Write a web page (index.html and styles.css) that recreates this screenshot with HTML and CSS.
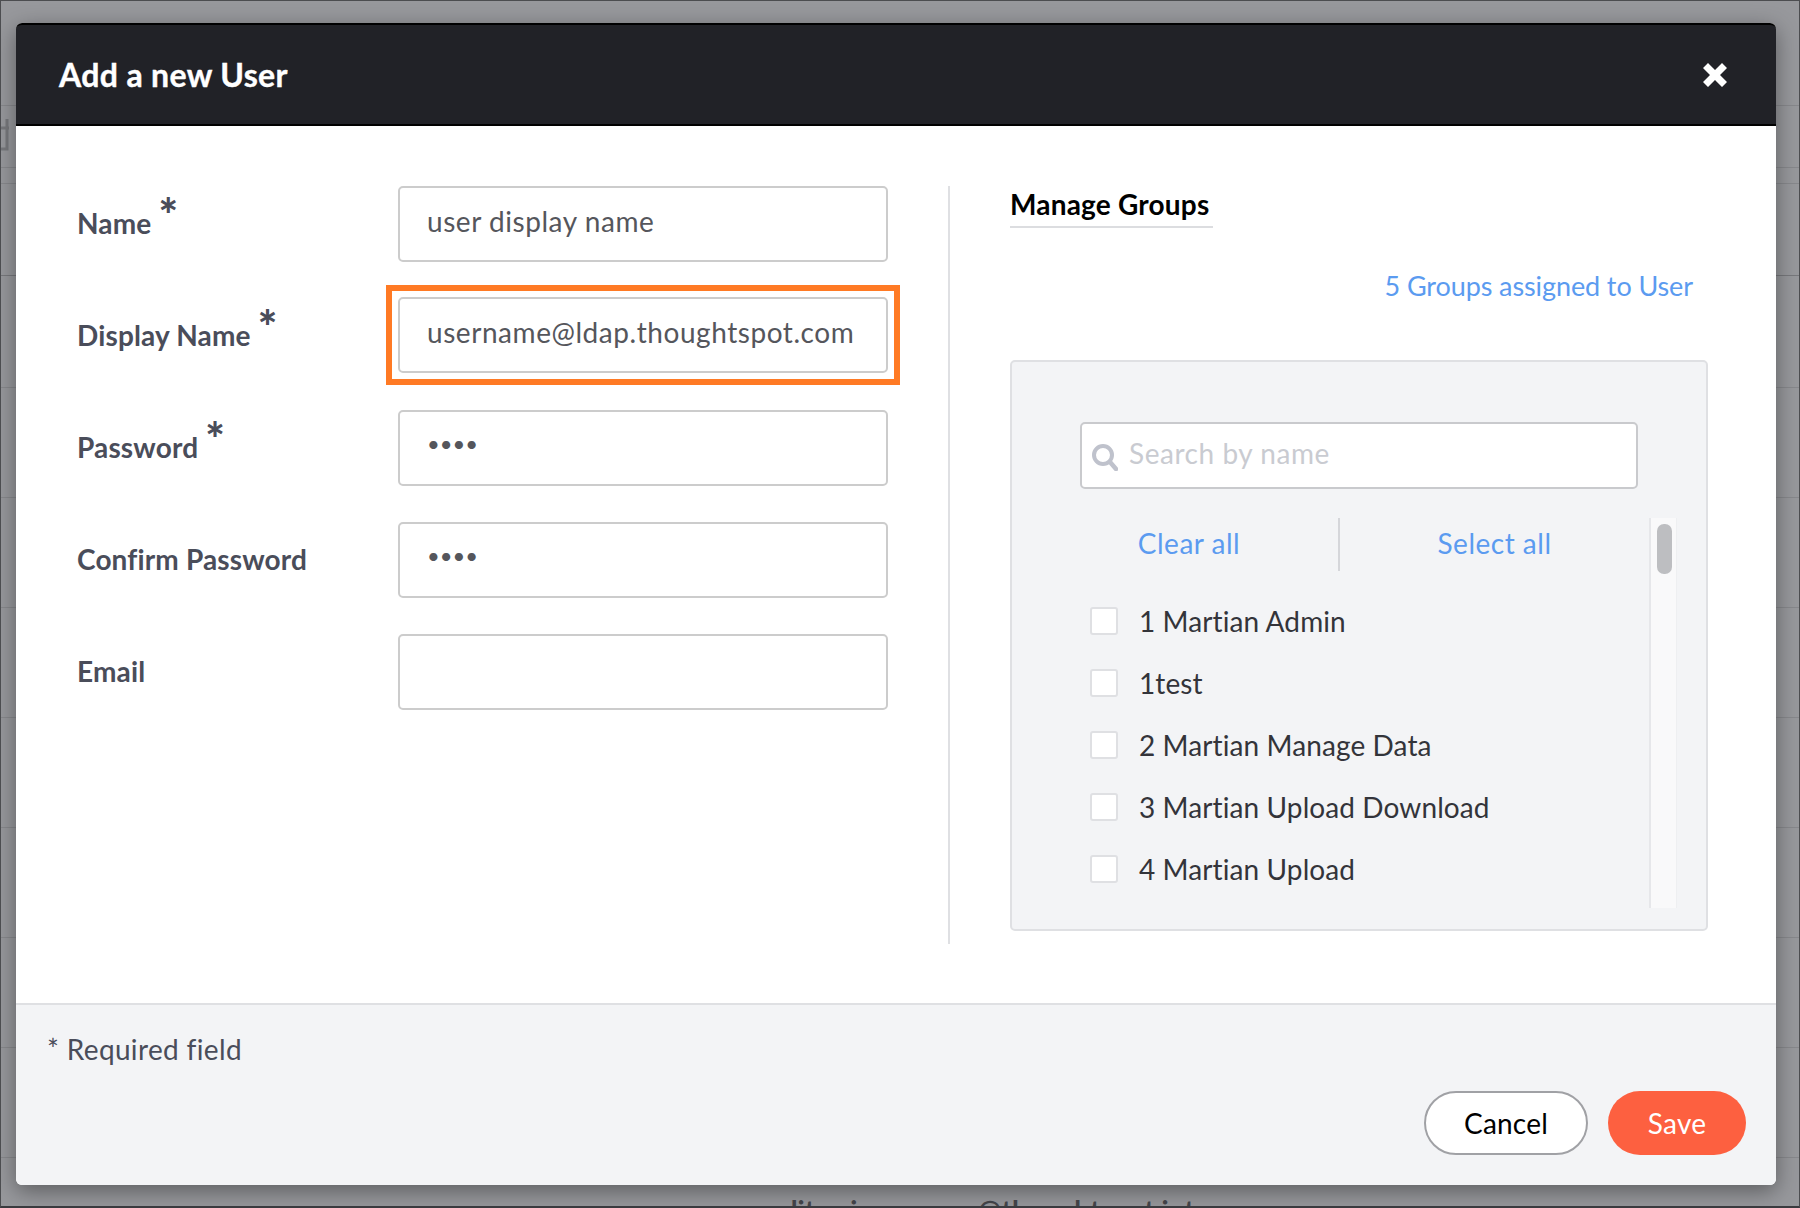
FILE: index.html
```html
<!DOCTYPE html>
<html lang="en">

<head>
    <meta charset="UTF-8">
    <meta name="viewport" content="width=device-width, initial-scale=1.0">
    <title>Add a new User</title>
    <link rel="stylesheet" href="styles.css">
</head>

<body>
    <div class="pageRows">
        <div class="pageRow topRow"></div>
        <div class="pageRow iconRow">
            <svg class="rowIcon" viewBox="0 0 9 34" width="9" height="34">
                <path d="M0 32H6V2M0 11H8" fill="none" stroke="#77787c" stroke-width="3"></path>
            </svg>
        </div>
        <div class="pageRow thinRow"></div>
        <div class="pageRow shortRow darkRow"></div>
        <div class="pageRow tallRow"></div>
        <div class="pageRow"></div>
        <div class="pageRow"></div>
        <div class="pageRow"></div>
        <div class="pageRow"></div>
        <div class="pageRow"></div>
        <div class="pageRow"></div>
        <div class="pageRow"></div>
        <div class="pageRow lastRow">aditya.jayaraman@thoughtspot.int</div>
    </div>

    <div class="modal">
        <div class="modalHeader">
            <span class="modalTitle">Add a new User</span>
            <svg class="closeIcon" viewBox="0 0 24 24" width="24" height="24">
                <path d="M5 0 12 7 19 0 24 5 17 12 24 19 19 24 12 17 5 24 0 19 7 12 0 5Z" fill="#fff"></path>
            </svg>
        </div>

        <div class="modalBody">
            <div class="userForm">
                <div class="formRow">
                    <label class="fieldLabel">Name<span class="star">*</span></label>
                    <input class="textInput" type="text" value="user display name">
                </div>
                <div class="formRow">
                    <label class="fieldLabel">Display Name<span class="star">*</span></label>
                    <div class="highlightBox">
                        <input class="textInput" type="text" value="username@ldap.thoughtspot.com">
                    </div>
                </div>
                <div class="formRow">
                    <label class="fieldLabel">Password<span class="star">*</span></label>
                    <input class="textInput passInput" type="password" value="1234">
                </div>
                <div class="formRow">
                    <label class="fieldLabel">Confirm Password</label>
                    <input class="textInput passInput" type="password" value="1234">
                </div>
                <div class="formRow">
                    <label class="fieldLabel">Email</label>
                    <input class="textInput" type="text">
                </div>
            </div>

            <div class="groupsSide">
                <div class="groupsTitle">Manage Groups</div>
                <div class="groupsCount">5 Groups assigned to User</div>
                <div class="groupsPanel">
                    <div class="searchBox">
                        <svg class="searchIcon" viewBox="0 0 26 28" width="26" height="28">
                            <circle cx="11" cy="12" r="9" fill="none" stroke="#bfc2cc" stroke-width="4"></circle>
                            <path d="M18 19 24 26" stroke="#bfc2cc" stroke-width="4.500" stroke-linecap="round"></path>
                        </svg>
                        <input class="searchInput" type="text" placeholder="Search by name">
                    </div>
                    <div class="listArea">
                        <div class="listMain">
                            <div class="listActions">
                                <a class="listAction clearAction">Clear all</a>
                                <a class="listAction selectAction">Select all</a>
                            </div>
                            <div class="groupItem"><span class="checkBox"></span>1 Martian Admin</div>
                            <div class="groupItem"><span class="checkBox"></span>1test</div>
                            <div class="groupItem"><span class="checkBox"></span>2 Martian Manage Data</div>
                            <div class="groupItem"><span class="checkBox"></span>3 Martian Upload Download</div>
                            <div class="groupItem"><span class="checkBox"></span>4 Martian Upload</div>
                        </div>
                        <div class="scrollTrack">
                            <div class="scrollThumb"></div>
                        </div>
                    </div>
                </div>
            </div>
        </div>

        <div class="modalFooter">
            <div class="requiredNote">* Required field</div>
            <div class="footerButtons">
                <button class="cancelBtn">Cancel</button>
                <button class="saveBtn">Save</button>
            </div>
        </div>
    </div>
</body>
</html>
```

FILE: styles.css
```css
* {
    box-sizing: border-box;
}

html {
    height: 100%;
    overflow: hidden;
}

body {
    height: 100%;
    margin: 0;
    overflow: hidden;
    position: relative;
    font-family: Lato, "Liberation Sans", sans-serif;
    background-color: #97989c;
    border: 1px solid #4c4d50;
    border-bottom: 2px solid #3a3b3f;
}

.pageRow {
    height: 110px;
    border-bottom: 1px solid #87888c;
}

.topRow {
    height: 105px;
}

.iconRow {
    height: 62px;
    padding-top: 11px;
}

.rowIcon {
    display: block;
}

.thinRow {
    height: 16px;
}

.shortRow {
    height: 92px;
}

.tallRow {
    height: 112px;
}

.darkRow {
    border-bottom-color: #77787c;
}

.lastRow {
    height: 60px;
    border-bottom: 0;
    padding: 35px 0 0 162px;
    text-align: center;
    font-size: 28px;
    font-weight: 700;
    color: #45464b;
}

.modal {
    position: absolute;
    left: 15px;
    top: 22px;
    width: 1760px;
    height: 1162px;
    display: flex;
    flex-direction: column;
    background-color: #fff;
    border-radius: 6px;
    box-shadow: 0 6px 22px rgba(0, 0, 0, 0.4);
}

.modalHeader {
    height: 103px;
    flex: none;
    display: flex;
    align-items: center;
    justify-content: space-between;
    padding: 0 49px 0 43px;
    background-color: #212227;
    border: 2px solid #000;
    border-width: 2px 0 2px 0;
    border-radius: 6px 6px 0 0;
}

.modalTitle {
    font-size: 32px;
    font-weight: 700;
    letter-spacing: 0.35px;
    color: #fff;
    -webkit-text-stroke: 0.4px #fff;
}

.modalBody {
    flex: 1;
    display: flex;
    padding: 60px 68px 0 61px;
}

.userForm {
    width: 873px;
    height: 758px;
    padding-right: 60px;
    border-right: 2px solid #dfe0e3;
}

.formRow {
    height: 112px;
    display: flex;
}

.fieldLabel {
    width: 321px;
    flex: none;
    padding-top: 20px;
    font-size: 28px;
    font-weight: 700;
    letter-spacing: 0.15px;
    color: #4a4d5a;
}

.star {
    display: inline-block;
    margin-left: 7px;
    font-size: 46px;
    font-weight: 900;
    line-height: 0;
    vertical-align: 2px;
}

.textInput {
    width: 491px;
    height: 76px;
    padding: 0 27px 7px;
    font-family: inherit;
    font-size: 28px;
    letter-spacing: 0.55px;
    color: #55565c;
    background-color: #fff;
    border: 2px solid #cccccc;
    border-radius: 5px;
    outline: none;
}

.passInput {
    font-size: 22px;
    letter-spacing: 0;
    padding-bottom: 10px;
}

.highlightBox {
    width: 514px;
    height: 100px;
    margin: -13px 0 0 -12px;
    padding: 6px;
    border: 6px solid #ff7a24;
}

.highlightBox .textInput {
    display: block;
    width: 490px;
}

.groupsSide {
    flex: 1;
    padding-left: 60px;
}

.groupsTitle {
    display: inline-block;
    height: 42px;
    padding-right: 4px;
    font-size: 28px;
    font-weight: 700;
    letter-spacing: 0.2px;
    line-height: 36px;
    color: #000;
    border-bottom: 2px solid #dcdde0;
}

.groupsCount {
    margin-top: 38px;
    padding-right: 15px;
    text-align: right;
    font-size: 27px;
    letter-spacing: -0.1px;
    line-height: 40px;
    color: #5b9bf0;
}

.groupsPanel {
    margin-top: 54px;
    height: 571px;
    padding: 60px 29px 0 68px;
    background-color: #f3f4f6;
    border: 2px solid #dfe0e3;
    border-radius: 5px;
}

.searchBox {
    position: relative;
    width: 558px;
    height: 67px;
    border: 2px solid #c9cacd;
    border-radius: 5px;
    background-color: #fff;
}

.searchIcon {
    position: absolute;
    left: 10px;
    top: 19px;
}

.searchInput {
    width: 100%;
    height: 100%;
    padding: 0 0 6px 47px;
    font-family: inherit;
    font-size: 28px;
    letter-spacing: 0.55px;
    background: none;
    border: 0;
    outline: none;
}

.searchInput::placeholder {
    color: #c9cbd1;
    opacity: 1;
}

.listArea {
    display: flex;
    margin-top: 29px;
}

.listMain {
    flex: 1;
    height: 390px;
    padding-left: 10px;
}

.listActions {
    display: flex;
    height: 53px;
    margin-bottom: 19px;
}

.listAction {
    text-align: center;
    font-size: 28px;
    letter-spacing: 0.5px;
    line-height: 50px;
    color: #5b9bf0;
}

.clearAction {
    width: 250px;
    padding-right: 50px;
    border-right: 2px solid #d5d6da;
}

.selectAction {
    flex: 1;
}

.groupItem {
    height: 62px;
    display: flex;
    align-items: center;
    gap: 21px;
    font-size: 28px;
    letter-spacing: 0.1px;
    color: #33343a;
}

.checkBox {
    width: 28px;
    height: 28px;
    flex: none;
    background-color: #fff;
    border: 2px solid #dfe0e3;
    border-radius: 3px;
}

.scrollTrack {
    width: 28px;
    flex: none;
    padding: 6px 6px;
    background-color: #f9f9fa;
    border-left: 2px solid #e6e7ea;
    border-right: 1px solid #eeeff1;
}

.scrollThumb {
    width: 15px;
    height: 50px;
    background-color: #bdbec1;
    border-radius: 7px;
}

.modalFooter {
    height: 182px;
    flex: none;
    display: flex;
    flex-direction: column;
    justify-content: space-between;
    padding: 27px 30px 30px 31px;
    background-color: #f3f4f6;
    border-top: 2px solid #dfe0e3;
    border-radius: 0 0 6px 6px;
}

.requiredNote {
    font-size: 28px;
    letter-spacing: 0.35px;
    color: #4a4d5a;
}

.footerButtons {
    display: flex;
    justify-content: flex-end;
    gap: 20px;
}

.cancelBtn,
.saveBtn {
    height: 64px;
    font-family: inherit;
    font-size: 28px;
    letter-spacing: 0.2px;
    border-radius: 32px;
    cursor: pointer;
}

.cancelBtn {
    width: 164px;
    color: #000;
    background-color: #fff;
    border: 2px solid #a0a1a5;
}

.saveBtn {
    width: 138px;
    color: #fff;
    background-color: #fd6040;
    border: 0;
}
```
